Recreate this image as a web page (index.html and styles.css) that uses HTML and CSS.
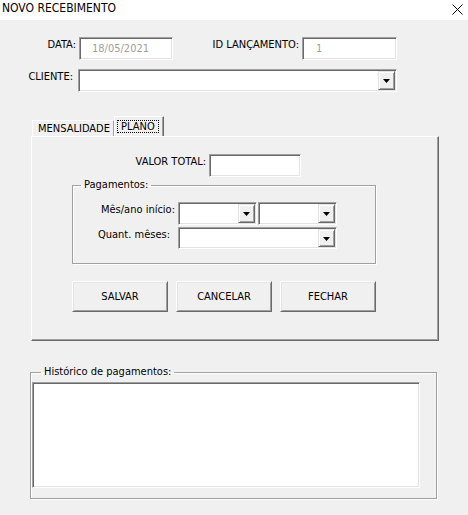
FILE: index.html
```html
<!DOCTYPE html>
<html lang="pt-BR">
<head>
    <meta charset="UTF-8">
    <meta name="viewport" content="width=device-width, initial-scale=1.0">
    <title>Novo Recebimento</title>
    <link rel="stylesheet" href="styles.css">
</head>
<body>
    <div class="titlebar">
        <span class="title">NOVO RECEBIMENTO</span>
        <svg class="close" width="11" height="11" viewBox="0 0 11 11">
            <path d="M0.5 0.5 L10.5 10.5 M10.5 0.5 L0.5 10.5" stroke="#000" stroke-width="1" fill="none"/>
        </svg>
    </div>

    <div class="form">
        <div class="row row-top">
            <label class="lbl lbl-data">DATA:</label>
            <div class="field field-data">18/05/2021</div>
            <label class="lbl lbl-id">ID LANÇAMENTO:</label>
            <div class="field field-id">1</div>
        </div>

        <div class="row row-cliente">
            <label class="lbl lbl-cliente">CLIENTE:</label>
            <div class="field combo combo-cliente">
                <span class="drop"><svg width="7" height="4" viewBox="0 0 7 4"><polygon points="0,0 7,0 3.5,4" fill="#000"/></svg></span>
            </div>
        </div>

        <div class="tabs">
            <div class="tab">MENSALIDADE</div>
            <div class="tab tab-active"><span class="focus">PLANO</span></div>
        </div>

        <div class="page">
            <div class="row row-valor">
                <label class="lbl lbl-valor">VALOR TOTAL:</label>
                <div class="field field-valor"></div>
            </div>

            <fieldset class="frame frame-pag">
                <legend>Pagamentos:</legend>
                <div class="row row-mes">
                    <label class="lbl lbl-mes">Mês/ano início:</label>
                    <div class="field combo combo-mes">
                        <span class="drop"><svg width="7" height="4" viewBox="0 0 7 4"><polygon points="0,0 7,0 3.5,4" fill="#000"/></svg></span>
                    </div>
                    <div class="field combo combo-ano">
                        <span class="drop"><svg width="7" height="4" viewBox="0 0 7 4"><polygon points="0,0 7,0 3.5,4" fill="#000"/></svg></span>
                    </div>
                </div>
                <div class="row row-quant">
                    <label class="lbl lbl-quant">Quant. mêses:</label>
                    <div class="field combo combo-quant">
                        <span class="drop"><svg width="7" height="4" viewBox="0 0 7 4"><polygon points="0,0 7,0 3.5,4" fill="#000"/></svg></span>
                    </div>
                </div>
            </fieldset>

            <div class="buttons">
                <button class="btn">SALVAR</button>
                <button class="btn">CANCELAR</button>
                <button class="btn">FECHAR</button>
            </div>
        </div>

        <fieldset class="frame frame-hist">
            <legend>Histórico de pagamentos:</legend>
            <div class="field listbox"></div>
        </fieldset>
    </div>
</body>
</html>
```

FILE: styles.css
```css
body {
    margin: 0;
    width: 468px;
    height: 515px;
    background-color: #f0f0f0;
    font-family: "DejaVu Sans Condensed", "DejaVu Sans", sans-serif;
    font-stretch: condensed;
    font-size: 11px;
    line-height: 13px;
    color: #000;
    overflow: hidden;
}
.titlebar {
    height: 20px;
    background-color: #fff;
    display: flex;
    justify-content: space-between;
    align-items: flex-start;
}
.title {
    font-size: 12px;
    line-height: 16px;
    padding-left: 2px;
}
.close {
    margin: 4px 5px 0 0;
}
.form {
    display: flex;
    flex-direction: column;
    align-items: flex-start;
}
.row {
    display: flex;
    align-items: flex-start;
}
.lbl {
    padding-top: 1px;
    text-align: right;
    box-sizing: border-box;
}
.field {
    background-color: #fff;
    border: 1px solid;
    border-color: #a0a0a0 #fff #fff #a0a0a0;
    box-shadow: inset 1px 1px 0 #696969, inset -1px -1px 0 #e3e3e3;
    box-sizing: border-box;
    height: 23px;
}
.combo {
    display: flex;
    justify-content: flex-end;
    padding: 1px;
}
.drop {
    width: 17px;
    height: 100%;
    box-sizing: border-box;
    background-color: #f0f0f0;
    border: 1px solid;
    border-color: #e3e3e3 #696969 #696969 #e3e3e3;
    box-shadow: inset 1px 1px 0 #fff, inset -1px -1px 0 #a0a0a0;
    display: flex;
    align-items: center;
    justify-content: center;
}
.drop svg {
    margin-top: 1px;
}

/* topo */
.row-top {
    margin-top: 17px;
}
.lbl-data {
    width: 76px;
    margin-right: 3px;
}
.field-data, .field-id {
    color: #a0a0a0;
    padding: 4px 0 0 12px;
}
.field-data {
    width: 94px;
}
.lbl-id {
    width: 126px;
    margin-right: 3px;
}
.field-id {
    width: 95px;
    padding-left: 13px;
}
.row-cliente {
    margin-top: 9px;
}
.lbl-cliente {
    width: 73px;
    margin-right: 5px;
}
.combo-cliente {
    width: 319px;
}

/* abas */
.tabs {
    margin-top: 24px;
    margin-left: 32px;
    height: 20px;
    display: flex;
    align-items: flex-end;
}
.tab {
    height: 16px;
    box-sizing: border-box;
    border-top: 1px solid #fff;
    border-left: 1px solid #fff;
    border-right: 1px solid #a0a0a0;
    padding: 1px 0 0 5px;
    width: 82px;
}
.tab-active {
    height: 20px;
    width: 50px;
    padding: 3px 0 0 2px;
    border-right: 1px solid #696969;
    box-shadow: inset -1px 0 0 #a0a0a0;
}
.focus {
    display: inline-block;
    border: 1px dotted #000;
    padding: 0 3px 0 3px;
    line-height: 11px;
    height: 11px;
}

.page {
    margin-left: 31px;
    width: 408px;
    height: 205px;
    box-sizing: border-box;
    border-top: 1px solid #fff;
    border-left: 1px solid #fff;
    border-right: 1px solid #696969;
    border-bottom: 1px solid #696969;
    box-shadow: inset -1px -1px 0 #a0a0a0;
    padding-top: 17px;
    display: flex;
    flex-direction: column;
    align-items: flex-start;
}
.lbl-valor {
    width: 174px;
    margin-right: 3px;
}
.field-valor {
    width: 92px;
}

/* frames */
.frame {
    margin: 0;
    padding: 0;
    min-width: 0;
    border: 1px solid #a0a0a0;
    box-shadow: 1px 1px 0 #fff, inset 1px 1px 0 #fff;
    box-sizing: border-box;
}
.frame legend {
    padding: 0 3px;
    line-height: 12px;
}
.frame-pag {
    margin: 2px 0 0 40px;
    width: 304px;
    padding: 11px 0 14px 0;
}
.frame-pag legend {
    margin-left: 8px;
}
.lbl-mes, .lbl-quant {
    width: 102px;
    margin-right: 3px;
}
.lbl-quant {
    padding-right: 5px;
}
.combo-mes, .combo-ano {
    width: 79px;
}
.combo-ano {
    margin-left: 1px;
}
.row-quant {
    margin-top: 2px;
}
.combo-quant {
    width: 159px;
    height: 22px;
}

.buttons {
    margin: 17px 0 0 40px;
    display: flex;
    gap: 8px;
}
.btn {
    width: 96px;
    height: 31px;
    font: inherit;
    color: #000;
    background-color: #f0f0f0;
    border: 1px solid;
    border-color: #fff #696969 #696969 #fff;
    box-shadow: inset 1px 1px 0 #e3e3e3, inset -1px -1px 0 #a0a0a0;
    padding: 0;
}

.frame-hist {
    margin: 25px 0 0 30px;
    width: 407px;
    padding: 4px 0 10px 1px;
}
.frame-hist legend {
    margin-left: 9px;
}
.listbox {
    width: 388px;
    height: 106px;
}
```
